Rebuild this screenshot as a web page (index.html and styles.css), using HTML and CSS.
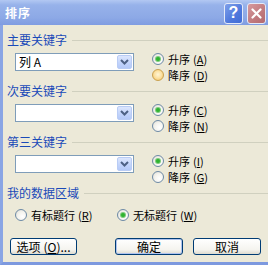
FILE: index.html
```html
<!DOCTYPE html>
<html lang="zh-CN">

<head>
    <meta charset="UTF-8" />
    <title>排序</title>
    <link rel="stylesheet" href="styles.css">
</head>

<body>
    <div class="dialog">
        <div class="titlebar">
            <span class="title">排序</span>
            <div class="title-buttons">
                <span class="tbtn help">?</span>
                <span class="tbtn close">
                    <svg width="11" height="11" viewBox="0 0 11 11"><path d="M1.5 1.5 L9.5 9.5 M9.5 1.5 L1.5 9.5" stroke="#fff" stroke-width="2.2" stroke-linecap="round" /></svg>
                </span>
            </div>
        </div>

        <div class="content">
            <div class="group">
                <div class="group-head"><span>主要关键字</span><i class="rule"></i></div>
                <div class="group-row">
                    <div class="combo">
                        <span class="combo-text">列 A</span>
                        <span class="combo-btn"><svg width="9" height="6" viewBox="0 0 9 6"><path d="M1 1 L4.5 4.5 L8 1" fill="none" stroke="#4D6185" stroke-width="2" /></svg></span>
                    </div>
                    <div class="radios">
                        <label class="radio"><span class="dot checked"></span>升序<span class="key">(<u>A</u>)</span></label>
                        <label class="radio"><span class="dot hot"></span>降序<span class="key">(<u>D</u>)</span></label>
                    </div>
                </div>
            </div>

            <div class="group">
                <div class="group-head"><span>次要关键字</span><i class="rule"></i></div>
                <div class="group-row">
                    <div class="combo">
                        <span class="combo-text"></span>
                        <span class="combo-btn"><svg width="9" height="6" viewBox="0 0 9 6"><path d="M1 1 L4.5 4.5 L8 1" fill="none" stroke="#4D6185" stroke-width="2" /></svg></span>
                    </div>
                    <div class="radios">
                        <label class="radio"><span class="dot checked"></span>升序<span class="key">(<u>C</u>)</span></label>
                        <label class="radio"><span class="dot"></span>降序<span class="key">(<u>N</u>)</span></label>
                    </div>
                </div>
            </div>

            <div class="group">
                <div class="group-head"><span>第三关键字</span><i class="rule"></i></div>
                <div class="group-row">
                    <div class="combo">
                        <span class="combo-text"></span>
                        <span class="combo-btn"><svg width="9" height="6" viewBox="0 0 9 6"><path d="M1 1 L4.5 4.5 L8 1" fill="none" stroke="#4D6185" stroke-width="2" /></svg></span>
                    </div>
                    <div class="radios">
                        <label class="radio"><span class="dot checked"></span>升序<span class="key">(<u>I</u>)</span></label>
                        <label class="radio"><span class="dot"></span>降序<span class="key">(<u>G</u>)</span></label>
                    </div>
                </div>
            </div>

            <div class="group">
                <div class="group-head"><span>我的数据区域</span><i class="rule"></i></div>
                <div class="data-row">
                    <label class="radio wide"><span class="dot"></span>有标题行<span class="key">(<u>R</u>)</span></label>
                    <label class="radio"><span class="dot checked"></span>无标题行<span class="key">(<u>W</u>)</span></label>
                </div>
            </div>

            <div class="actions">
                <button class="btn options">选项<span class="key">(<u>O</u>)...</span></button>
                <button class="btn default">确定</button>
                <button class="btn">取消</button>
            </div>
        </div>
    </div>
</body>

</html>
```

FILE: styles.css
```css
body {
    margin: 0;
    font-family: "Noto Sans CJK SC", "DejaVu Sans", sans-serif;
    font-size: 12px;
    color: #000;
    background: #ECE9D8;
}

.dialog {
    width: 268px;
    height: 265px;
    display: flex;
    flex-direction: column;
    overflow: hidden;
}

.titlebar {
    height: 25px;
    display: flex;
    align-items: center;
    justify-content: space-between;
    padding-left: 5px;
    background: linear-gradient(#B2C8F2, #97B2EA 20%, #8DA9E6 70%, #7F9CE1);
}

.title {
    color: #fff;
    font-weight: bold;
    font-size: 12px;
    letter-spacing: 1px;
}

.title-buttons {
    display: flex;
    gap: 4px;
    padding-right: 2px;
    padding-top: 1px;
}

.tbtn {
    width: 17px;
    height: 19px;
    border: 1px solid #E4EAF8;
    border-radius: 3px;
    display: flex;
    align-items: center;
    justify-content: center;
    color: #fff;
    font-family: "Liberation Sans", sans-serif;
    font-weight: bold;
    font-size: 16px;
}

.help {
    background: linear-gradient(135deg, #7FA0EA, #4E78DC 60%, #416CD5);
}

.close {
    background: linear-gradient(135deg, #D79A9E, #C0797D 60%, #B36A6F);
}

.content {
    flex: 1;
    background: #ECE9D8;
    border-left: 3px solid #8AA5E4;
    border-bottom: 3px solid #7D99DF;
    padding: 8px 0 0 4px;
}

.group {
    margin-bottom: 3px;
}

.group-head {
    display: flex;
    align-items: center;
    height: 14px;
    line-height: 14px;
    color: #1A4AB8;
}

.rule {
    flex: 1;
    height: 1px;
    margin-left: 5px;
    background: #D0D0BF;
}

.group-row {
    display: flex;
    height: 28px;
    margin-top: 6px;
    padding-left: 8px;
}

.combo {
    width: 117px;
    height: 16px;
    border: 1px solid #7F9DB9;
    background: #fff;
    display: flex;
    justify-content: space-between;
}

.combo-text {
    padding-left: 3px;
    line-height: 16px;
}

.combo-btn {
    width: 15px;
    height: 14px;
    margin: 1px;
    border: 1px solid #B9CCF5;
    box-sizing: border-box;
    border-radius: 2px;
    background: linear-gradient(#DCE6FD, #C1D3FB 60%, #B4C9F8);
    display: flex;
    align-items: center;
    justify-content: center;
}

.radios {
    margin-left: 18px;
    margin-top: -2px;
}

.radio {
    display: flex;
    align-items: center;
    height: 16px;
    line-height: 16px;
    font-size: 11px;
    white-space: nowrap;
}

.key {
    margin-left: 3px;
}

.dot {
    width: 10px;
    height: 10px;
    border: 1px solid #6D8AA6;
    border-radius: 50%;
    margin-right: 4px;
    background: radial-gradient(circle at 65% 65%, #FFFFFF, #F4F3EE 50%, #DCDAD0);
    display: flex;
    align-items: center;
    justify-content: center;
}

.dot.checked::after {
    content: "";
    width: 4px;
    height: 4px;
    border-radius: 50%;
    background: #2FB32F;
    box-shadow: 0 0 0 1px #7CCB7C;
}

.dot.hot {
    background: radial-gradient(circle at 50% 45%, #FFF5D6, #FCE3A6 45%, #F4C060);
    border-color: #C9A14F;
}

.data-row {
    display: flex;
    margin-top: 7px;
    padding-left: 8px;
}

.radio.wide {
    width: 102px;
}

.actions {
    display: flex;
    margin-top: 15px;
    padding-left: 3px;
}

.btn {
    width: 68px;
    height: 17px;
    padding: 0;
    border: 1px solid #003C74;
    border-radius: 3px;
    background: linear-gradient(#FFFFFF, #F5F4EF 70%, #DEDBCF);
    font-family: inherit;
    font-size: 12px;
    line-height: 15px;
    color: #000;
}

.btn.options {
    width: 67px;
    margin-right: 38px;
}

.btn.default {
    margin-right: 10px;
    box-shadow: inset 0 0 0 1px #AFC3EE;
}
```
